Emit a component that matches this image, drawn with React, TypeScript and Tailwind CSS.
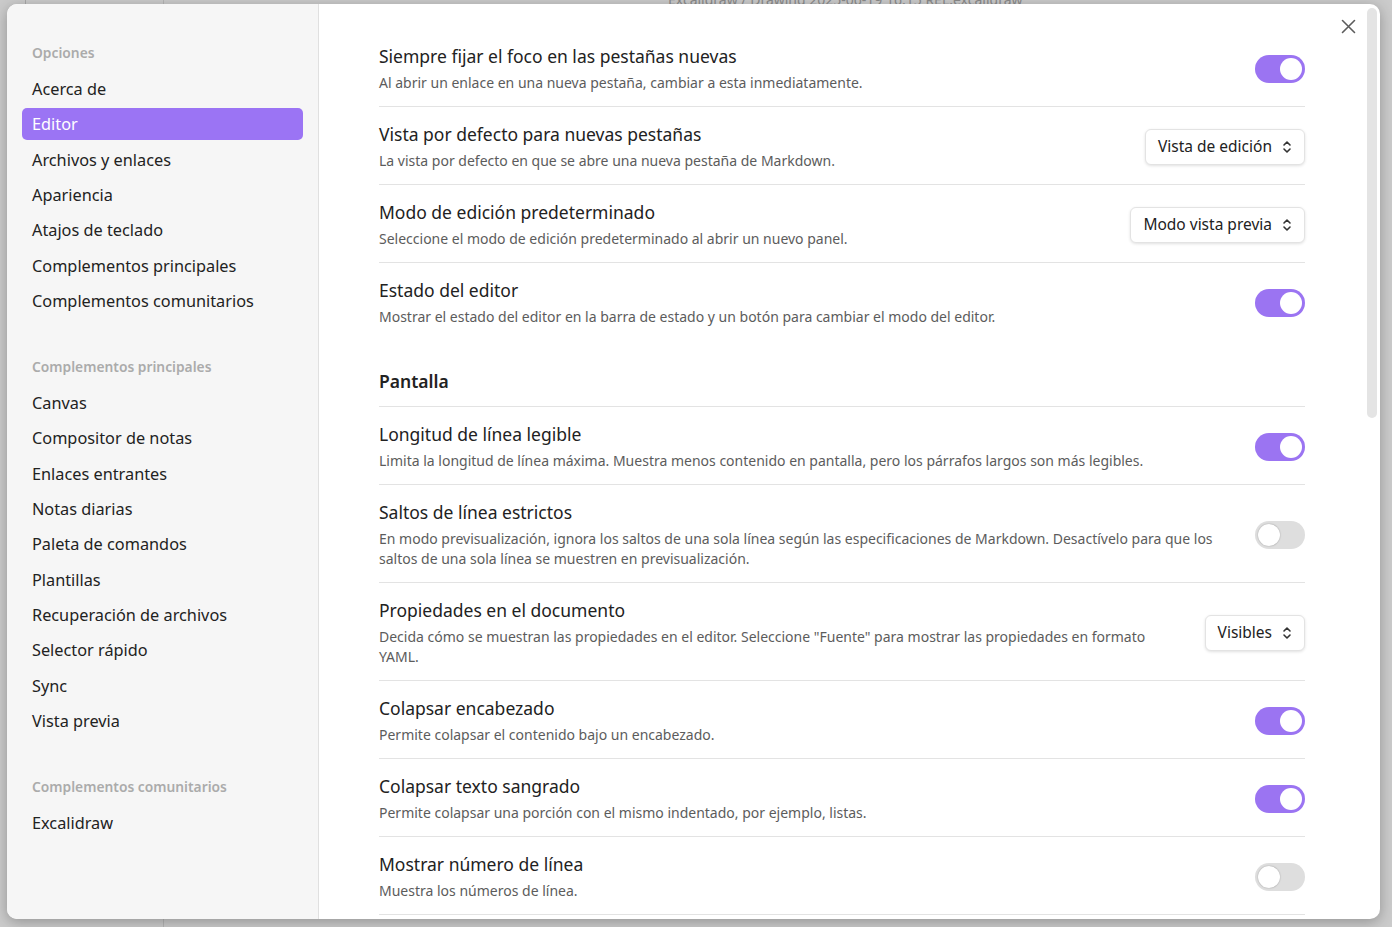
import React from "react";

const FONT = { fontFamily: '"Noto Sans", "Open Sans", sans-serif' };

type Item =
  | { kind: "toggle"; name: string; desc: string[]; on: boolean; noBorder?: boolean }
  | { kind: "select"; name: string; desc: string[]; value: string; noBorder?: boolean }
  | { kind: "heading"; name: string };

const items: Item[] = [
  { kind: "toggle", name: "Siempre fijar el foco en las pestañas nuevas", desc: ["Al abrir un enlace en una nueva pestaña, cambiar a esta inmediatamente."], on: true },
  { kind: "select", name: "Vista por defecto para nuevas pestañas", desc: ["La vista por defecto en que se abre una nueva pestaña de Markdown."], value: "Vista de edición" },
  { kind: "select", name: "Modo de edición predeterminado", desc: ["Seleccione el modo de edición predeterminado al abrir un nuevo panel."], value: "Modo vista previa" },
  { kind: "toggle", name: "Estado del editor", desc: ["Mostrar el estado del editor en la barra de estado y un botón para cambiar el modo del editor."], on: true, noBorder: true },
  { kind: "heading", name: "Pantalla" },
  { kind: "toggle", name: "Longitud de línea legible", desc: ["Limita la longitud de línea máxima. Muestra menos contenido en pantalla, pero los párrafos largos son más legibles."], on: true },
  { kind: "toggle", name: "Saltos de línea estrictos", desc: ["En modo previsualización, ignora los saltos de una sola línea según las especificaciones de Markdown. Desactívelo para que los", "saltos de una sola línea se muestren en previsualización."], on: false },
  { kind: "select", name: "Propiedades en el documento", desc: ["Decida cómo se muestran las propiedades en el editor. Seleccione \"Fuente\" para mostrar las propiedades en formato", "YAML."], value: "Visibles" },
  { kind: "toggle", name: "Colapsar encabezado", desc: ["Permite colapsar el contenido bajo un encabezado."], on: true },
  { kind: "toggle", name: "Colapsar texto sangrado", desc: ["Permite colapsar una porción con el mismo indentado, por ejemplo, listas."], on: true },
  { kind: "toggle", name: "Mostrar número de línea", desc: ["Muestra los números de línea."], on: false },
];

const nav: { header: string; items: string[] }[] = [
  { header: "Opciones", items: ["Acerca de", "Editor", "Archivos y enlaces", "Apariencia", "Atajos de teclado", "Complementos principales", "Complementos comunitarios"] },
  { header: "Complementos principales", items: ["Canvas", "Compositor de notas", "Enlaces entrantes", "Notas diarias", "Paleta de comandos", "Plantillas", "Recuperación de archivos", "Selector rápido", "Sync", "Vista previa"] },
  { header: "Complementos comunitarios", items: ["Excalidraw"] },
];

function Toggle({ on }: { on: boolean }) {
  return (
    <div
      className={
        "relative w-[50px] h-[28px] rounded-full shrink-0 " +
        (on ? "bg-[#9b74f2]" : "bg-[#dedede]")
      }
    >
      <div
        className={
          "absolute top-[3px] w-[22px] h-[22px] rounded-full bg-white " +
          (on ? "left-[25px]" : "left-[3px] shadow-[0_0_1.5px_rgba(0,0,0,0.35)]")
        }
      />
    </div>
  );
}

function Select({ value }: { value: string }) {
  return (
    <div className="shrink-0 h-[36px] flex items-center gap-[10px] pl-[12px] pr-[12px] rounded-[6px] border border-[#e3e3e3] bg-white shadow-[0_1px_3px_rgba(0,0,0,0.12)] text-[15.5px] text-[#222222]">
      <span>{value}</span>
      <svg width="10" height="14" viewBox="0 0 10 14" fill="none" stroke="#333" strokeWidth="1.6" strokeLinecap="round" strokeLinejoin="round">
        <path d="M2 5 L5 2 L8 5" />
        <path d="M2 9 L5 12 L8 9" />
      </svg>
    </div>
  );
}

export default function App() {
  return (
    <div className="relative w-[1392px] h-[927px] overflow-hidden bg-[#cbcbcb]" style={FONT}>
      {/* faint app behind */}
      <div className="absolute left-[163px] top-0 bottom-0 w-px bg-[#b5b5b5]" />
      <div className="absolute left-[25px] top-0 h-[4px] w-px bg-[#a9a9a9]" />
      <div className="absolute left-[668px] top-[-11px] text-[14px] text-[#8a8a8a] whitespace-nowrap">
        Excalidraw / Drawing 2025-06-19 16.15 REL.excalidraw
      </div>

      <div className="pt-[4px] pl-[7px]">
        <div className="relative flex w-[1373px] h-[915px] rounded-[10px] overflow-hidden bg-white shadow-[0_3px_14px_rgba(0,0,0,0.28)]">
          {/* Sidebar */}
          <div className="w-[312px] shrink-0 bg-[#f6f6f6] border-r border-[#e0e0e0] pt-[39px] px-[15px]">
            {nav.map((g, gi) => (
              <div key={gi} className={gi > 0 ? "mt-[40px]" : ""}>
                <div className="h-[20px] leading-[20px] pl-[10px] text-[13.8px] font-semibold text-[#ababab] mb-[10px]">
                  {g.header}
                </div>
                <div className="flex flex-col gap-[3.33px]">
                  {g.items.map((it) => {
                    const active = gi === 0 && it === "Editor";
                    return (
                      <div
                        key={it}
                        className={
                          "h-[32px] leading-[32px] pl-[10px] rounded-[5px] text-[16.3px] " +
                          (active ? "bg-[#9b74f4] text-white" : "text-[#222222]")
                        }
                      >
                        {it}
                      </div>
                    );
                  })}
                </div>
              </div>
            ))}
          </div>

          {/* Content */}
          <div className="flex-1 pl-[60px] pr-[61px] pt-[25px] overflow-hidden">
            {items.map((it, i) => {
              if (it.kind === "heading") {
                return (
                  <div key={i} className="pt-[29px] pb-[13px] border-b border-[#e3e3e3] text-[17.5px] leading-[24px] font-semibold text-[#222222]">
                    {it.name}
                  </div>
                );
              }
              return (
                <div
                  key={i}
                  className={
                    "flex items-center pt-[15px] pb-[13px] " + (it.noBorder ? "" : "border-b border-[#e3e3e3]")
                  }
                >
                  <div className="flex-1 min-w-0 pr-[24px]">
                    <div className="text-[17.5px] leading-[24px] text-[#222222]">{it.name}</div>
                    <div className="mt-[5px] text-[14px] leading-[20px] text-[#5c5c5c]">
                      {it.desc.map((d, j) => (
                        <div key={j} className="whitespace-nowrap">{d}</div>
                      ))}
                    </div>
                  </div>
                  {it.kind === "toggle" ? <Toggle on={it.on} /> : <Select value={it.value} />}
                </div>
              );
            })}
          </div>

          {/* Scrollbar */}
          <div className="w-[14px] shrink-0 pt-[4px]">
            <div className="ml-[1px] w-[10px] h-[410px] rounded-full bg-[#e4e4e4]" />
          </div>

          {/* Close */}
          <div className="absolute right-[24px] top-[15px]">
            <svg width="15" height="15" viewBox="0 0 15 15" stroke="#5c5c5c" strokeWidth="1.6" strokeLinecap="round">
              <path d="M1.5 1.5 L13.5 13.5 M13.5 1.5 L1.5 13.5" />
            </svg>
          </div>
        </div>
      </div>
    </div>
  );
}
